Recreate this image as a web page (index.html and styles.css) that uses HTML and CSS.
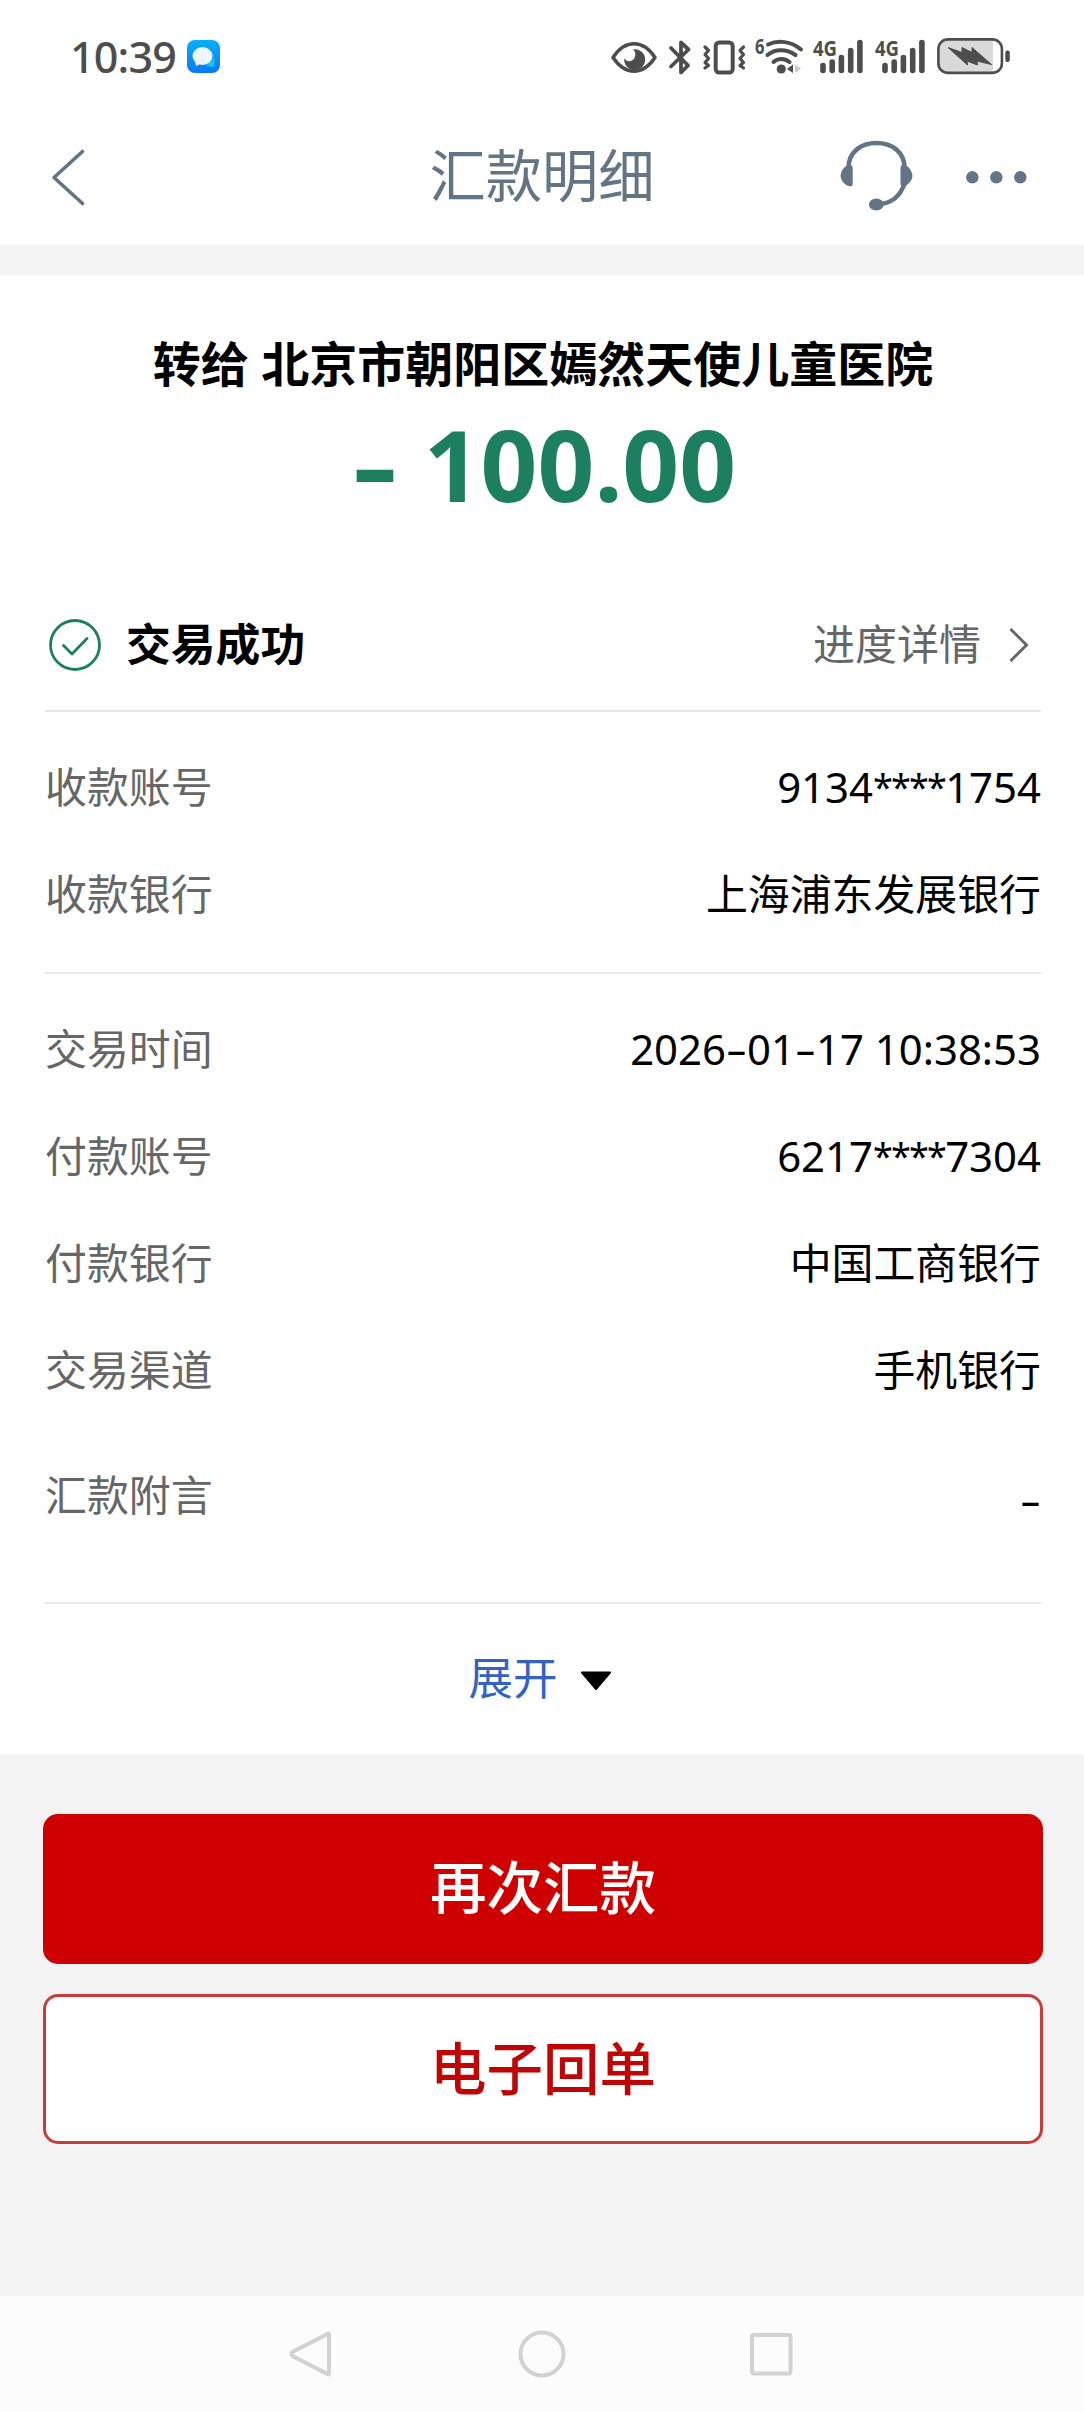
FILE: index.html
```html
<!DOCTYPE html>
<html lang="zh-CN">
<head>
<meta charset="utf-8">
<title>汇款明细</title>
<link rel="stylesheet" href="styles.css">
</head>
<body>
<div class="screen">
  <div class="status-bar">
    <span class="clock">10:39</span>
    <svg class="app-badge" width="33" height="33" viewBox="0 0 33 33">
      <defs>
        <linearGradient id="badge" x1="0" y1="0" x2="0" y2="1"><stop offset="0" stop-color="#08b0fb"/><stop offset="1" stop-color="#0a78f2"/></linearGradient>
      </defs>
      <rect width="33" height="33" rx="8" fill="url(#badge)"/>
      <path d="M27 17c1 4 0 6 .3 9.500-3 .8-5 .2-8-.8z" fill="#12c3f7"/>
      <ellipse cx="15.500" cy="16" rx="10" ry="9" fill="#edf6ff"/>
      <path d="M8 20l1 6 6-3z" fill="#edf6ff"/>
    </svg>
    <div class="indicators">
      <svg width="54" height="50" viewBox="610 30 54 50">
        <path d="M613 56.500C620 46 627 42.800 634 42.800S648 46 655 56.500C648 67 641 70.200 634 70.200S620 67 613 56.500Z" fill="none" stroke="#4d4d4d" stroke-width="3.500" stroke-linejoin="round"/>
        <path d="M633 48.300A10.500 10.500 0 1 1 624.300 57C625 60 629 61 632 59.500C636 57.500 636.500 51.500 633 48.300Z" fill="#4d4d4d"/>
      </svg>
      <svg width="34" height="50" viewBox="664 30 34 50">
        <path d="M671 47L688 64.500 681 71.500V59M681 53V41.500L688.500 48.500 671 65.500" fill="none" stroke="#4d4d4d" stroke-width="3.800" stroke-linecap="round" stroke-linejoin="round"/>
      </svg>
      <svg width="52" height="50" viewBox="698 30 52 50">
        <rect x="715.700" y="41.500" width="17" height="30" rx="3.500" fill="none" stroke="#4d4d4d" stroke-width="4"/>
        <path d="M705 46l3.500 3.500-3.500 4 3.500 4-3.500 4 3.500 3-3.500 2.500M743.500 46l-3.500 3.500 3.500 4-3.500 4 3.500 4-3.500 3 3.500 2.500" fill="none" stroke="#4d4d4d" stroke-width="3.200" stroke-linecap="round" stroke-linejoin="round"/>
      </svg>
      <svg width="60" height="50" viewBox="750 30 60 50">
        <text class="tag" x="755" y="53" textLength="9.500" lengthAdjust="spacingAndGlyphs">6</text>
        <g fill="none" stroke="#4d4d4d" stroke-width="4" stroke-linecap="round">
          <path d="M768 43.500C778 39 791 40 801 48.500M767.500 54C775 48 786 47.500 795.500 54M773.500 61C778 57 784.500 57 789.500 61"/>
        </g>
        <circle cx="781.300" cy="68" r="4.600" fill="#4d4d4d"/>
        <path d="M793 63.500V72L787 68Z" fill="#4d4d4d"/>
        <path d="M795 63.500V72L801 67.500Z" fill="#ccc"/>
      </svg>
      <svg width="58" height="50" viewBox="810 30 58 50">
        <text class="tag" x="813" y="54.500" textLength="24" lengthAdjust="spacingAndGlyphs">4G</text>
        <path d="M823 64.500V69.500M832.200 61V69.500M841.400 56.500V69.500M850.700 49.500V69.500M859.900 41.500V69.500" stroke="#4d4d4d" stroke-width="5.600" stroke-linecap="round"/>
      </svg>
      <svg width="66" height="50" viewBox="868 30 66 50">
        <text class="tag" x="875" y="54.500" textLength="24" lengthAdjust="spacingAndGlyphs">4G</text>
        <path d="M885 64.500V69.500M894.200 61V69.500M903.400 56.500V69.500M912.700 49.500V69.500M921.900 41.500V69.500" stroke="#4d4d4d" stroke-width="5.600" stroke-linecap="round"/>
      </svg>
      <svg width="80" height="50" viewBox="934 30 80 50">
        <path d="M947 38.500H993V71.500H947Q939 71.500 939 63V47Q939 38.500 947 38.500Z" fill="#d9d9d9"/>
        <rect x="938.400" y="38.400" width="63.500" height="33.500" rx="9.500" fill="none" stroke="#4d4d4d" stroke-width="2.600"/>
        <path d="M948 46.500L962 51.500 962 46.500 972 51.500 972 46.500 991.500 63.500 977 60 977.500 64 967 60 967.500 64Z" fill="#4d4d4d" stroke="#4d4d4d" stroke-linejoin="round"/>
        <rect x="1005.300" y="49.500" width="4.500" height="11.500" rx="2" fill="#4d4d4d"/>
      </svg>
    </div>
  </div>

  <div class="title-bar">
    <svg class="back" width="36" height="60" viewBox="50 147 36 60">
      <path d="M82.500 151.500L54 177.500 82.500 203.500" fill="none" stroke="#637585" stroke-width="3.600" stroke-linecap="round" stroke-linejoin="round"/>
    </svg>
    <h1 class="title">汇款明细</h1>
    <div class="actions">
      <svg width="76" height="76" viewBox="838 139 76 76">
        <path d="M848.500 168C848.500 152 861 143 876.500 143S904.500 152 904.500 168" fill="none" stroke="#637585" stroke-width="4.600"/>
        <path d="M852.700 168C852.700 163 846 165 843 169Q838 176 843 182C846 186.500 852.700 188 852.700 184ZM900.500 168C900.500 163 907 165 910 169Q915 176 910 182C907 186.500 900.500 188 900.500 184Z" fill="#637585"/>
        <path d="M904.500 184C900 196 893 203 880 204" fill="none" stroke="#637585" stroke-width="4.400"/>
        <ellipse cx="876.300" cy="204.500" rx="7.400" ry="6" fill="#637585"/>
      </svg>
      <svg width="64" height="14" viewBox="964 170 64 14" fill="#637585">
        <circle cx="972.300" cy="177.300" r="6.200"/><circle cx="996.300" cy="177.300" r="6.200"/><circle cx="1020.300" cy="177.300" r="6.200"/>
      </svg>
    </div>
  </div>

  <div class="card">
    <div class="summary">
      <div class="payee">转给 北京市朝阳区嫣然天使儿童医院</div>
      <div class="amount"><span class="minus">-</span> 100.00</div>
    </div>
    <div class="result">
      <svg width="54" height="54" viewBox="0 0 54 54" fill="none" stroke="#1b7f60" stroke-width="2.800" stroke-linecap="round" stroke-linejoin="round">
        <circle cx="27" cy="27" r="24.500"/><path d="M15.500 27.500L24 36 39 20.500"/>
      </svg>
      <span class="result-text">交易成功</span>
      <a class="progress"><span class="progress-text">进度详情</span>
        <svg width="22" height="36" viewBox="0 0 22 36"><path d="M2.500 2L18.500 18 2.500 34" fill="none" stroke="#666" stroke-width="3"/></svg>
      </a>
    </div>
    <div class="group payee-group">
      <div class="row"><span class="label">收款账号</span><span class="value">9134<span class="mask">****</span>1754</span></div>
      <div class="row"><span class="label">收款银行</span><span class="value">上海浦东发展银行</span></div>
    </div>
    <div class="group payer-group">
      <div class="row"><span class="label">交易时间</span><span class="value">2026<span class="dash">-</span>01<span class="dash">-</span>17 10:38:53</span></div>
      <div class="row"><span class="label">付款账号</span><span class="value">6217<span class="mask">****</span>7304</span></div>
      <div class="row"><span class="label">付款银行</span><span class="value">中国工商银行</span></div>
      <div class="row"><span class="label">交易渠道</span><span class="value">手机银行</span></div>
      <div class="row note"><span class="label">汇款附言</span><span class="value"><span class="dash">-</span></span></div>
    </div>
    <div class="expand">
      <span class="expand-text">展开</span>
      <svg width="32" height="20" viewBox="0 0 32 20"><path d="M2 1.500H30L16 18Z" stroke="#000" stroke-linejoin="round" stroke-width="2"/></svg>
    </div>
  </div>

  <div class="buttons">
    <button class="btn primary">再次汇款</button>
    <button class="btn outline">电子回单</button>
  </div>

  <div class="nav-bar">
    <svg width="52" height="52" viewBox="0 0 52 52"><path d="M42 6.500V45.500Q42 47 40.500 46L5.500 28Q3.500 26 5.500 24L40.500 6Q42 5 42 6.500Z"/></svg>
    <svg width="52" height="52" viewBox="0 0 52 52"><circle cx="26" cy="26" r="21.500"/></svg>
    <svg width="52" height="52" viewBox="0 0 52 52"><rect x="7" y="7" width="38.500" height="38.500" rx="2"/></svg>
  </div>
</div>
</body>
</html>
```
FILE: styles.css
```css
* { box-sizing: border-box; }

body {
  margin: 0;
  background: #f3f3f3;
  color: #000;
  font-family: "Noto Sans", "Noto Sans CJK SC", sans-serif;
}

svg { display: block; flex: none; }

.screen {
  display: flex;
  flex-direction: column;
  width: 1084px;
  height: 2412px;
}

.status-bar {
  display: flex;
  align-items: center;
  height: 110px;
  padding: 2px 70px 0 70px;
  background: #fff;
}

.clock {
  width: 117px;
  color: #4d4d4d;
  font-size: 43px;
  font-weight: 500;
  letter-spacing: -0.8px;
}

.indicators { display: flex; margin-left: auto; }

.tag {
  fill: #4d4d4d;
  font-size: 22px;
  font-weight: 700;
}

.title-bar {
  display: grid;
  grid-template-columns: 1fr auto 1fr;
  align-items: center;
  height: 135px;
  padding: 0 56px 1px 50px;
  background: #fff;
}

.title {
  margin: 0;
  padding: 0 0 5px 6px;
  color: #637585;
  font-size: 56.300px;
  font-weight: 400;
  line-height: 80px;
}

.actions {
  display: flex;
  align-items: center;
  justify-content: flex-end;
  gap: 50px;
}

.card {
  display: flex;
  flex-direction: column;
  height: 1479px;
  margin-top: 30px;
  padding: 0 43px 0 45px;
  background: #fff;
}

.summary {
  height: 303px;
  padding-top: 54px;
  text-align: center;
}

.payee {
  font-size: 48px;
  font-weight: 700;
  line-height: 70px;
  white-space: nowrap;
}

.amount {
  padding-left: 2px;
  color: #1b7f60;
  font-size: 99.500px;
  font-weight: 700;
  line-height: 130px;
}

.minus {
  display: inline-block;
  width: 46px;
  transform: scaleX(1.4);
}

.result {
  display: flex;
  align-items: center;
  height: 134px;
  padding: 1px 11px 0 3px;
  border-bottom: 2px solid #e8e8e8;
}

.result-text {
  margin-left: 24px;
  padding-bottom: 7px;
  font-size: 44.800px;
  font-weight: 700;
}

.progress {
  display: flex;
  align-items: center;
  gap: 27px;
  margin-left: auto;
  color: #666;
  font-size: 42px;
}

.progress-text { padding-bottom: 7px; }

.group { border-bottom: 2px solid #e8e8e8; }

.payee-group { height: 262px; padding-top: 21px; }
.payer-group { height: 630px; padding-top: 21px; }

.row {
  display: flex;
  align-items: center;
  justify-content: space-between;
  height: 107px;
  font-size: 41.900px;
  line-height: 60px;
}

.row.note { height: 144px; }
.row.note .value { padding-top: 9px; }

.label { color: #666; }

.mask {
  font-size: 36px;
  letter-spacing: -1.800px;
  line-height: 1;
  vertical-align: 3px;
}

.dash {
  display: inline-block;
  width: 21px;
  text-align: center;
  transform: scaleX(1.6);
}

.expand {
  display: flex;
  align-items: center;
  justify-content: center;
  gap: 22px;
  height: 150px;
  padding: 3px 6px 0 0;
  color: #3263c4;
  font-size: 44.500px;
}

.expand-text { padding-bottom: 10px; }

.buttons {
  display: flex;
  flex-direction: column;
  gap: 30px;
  padding: 60px 41px 0 43px;
}

.btn {
  height: 150px;
  padding: 0 0 10px;
  border: 0;
  border-radius: 15px;
  font-family: inherit;
  font-size: 56.500px;
  font-weight: 500;
}

.primary { background: #cf0000; color: #fff; }

.outline {
  padding-bottom: 7px;
  border: 3px solid #c83c3a;
  background: #fff;
  color: #c00505;
}

.nav-bar {
  display: flex;
  align-items: center;
  justify-content: center;
  gap: 177px;
  height: 116px;
  margin-top: auto;
  background: #fcfcfc;
}

.nav-bar svg { fill: none; stroke: #d2d2d2; stroke-width: 4; }
```
